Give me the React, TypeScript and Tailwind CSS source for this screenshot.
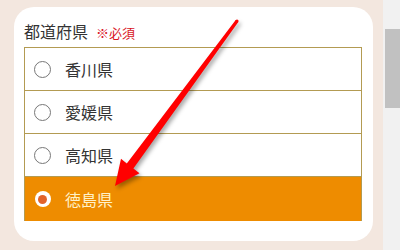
import React from 'react'

const prefs = ['香川県', '愛媛県', '高知県', '徳島県']
const selected = '徳島県'

function Arrow() {
  return (
    <svg
      className="absolute left-0 top-0 pointer-events-none"
      width="400"
      height="250"
      viewBox="0 0 400 250"
      style={{ filter: 'drop-shadow(2px 3px 2px rgba(0,0,0,0.35))' }}
    >
      <circle cx="237" cy="21" r="1.6" fill="#ff0000" />
      <polygon
        points="235.7,20.1 238.3,21.9 133.4,168.4 139.5,173.2 115,186 121,158.8 126.8,163.6"
        fill="#ff0000"
      />
    </svg>
  )
}

export default function App() {
  return (
    <div
      className="relative flex w-[400px] h-[250px] overflow-hidden bg-[#f3e7df]"
      style={{ fontFamily: '"Noto Sans CJK JP", "Noto Sans", sans-serif' }}
    >
      <div className="w-[383px] pl-[14px] pt-[7px]">
        {/* Card */}
        <div className="w-[359px] h-[234px] rounded-[20px] bg-white pl-[10px] pt-[12px]">
          <div className="flex items-baseline h-[24px] leading-[24px]">
            <span className="text-[16px] text-[#333]">都道府県</span>
            <span className="ml-[8px] text-[13px] text-[#d9141e]">※必須</span>
          </div>
          <div className="mt-[4px] w-[338px] border border-[#b39b52]">
            {prefs.map((p) => {
              const on = p === selected
              return (
                <div
                  key={p}
                  className={
                    on
                      ? 'flex items-center h-[44px] bg-[#ee8c00] -mb-px'
                      : 'flex items-center h-[43px] border-b border-[#b39b52]'
                  }
                >
                  <div className="w-[17px] ml-[9px] flex items-center justify-center">
                    {on ? (
                      <div className="w-[16px] h-[16px] rounded-full bg-white flex items-center justify-center">
                        <div className="w-[9px] h-[9px] rounded-full bg-[#e2632a]" />
                      </div>
                    ) : (
                      <div className="w-[17px] h-[17px] rounded-full border border-[#777] bg-white" />
                    )}
                  </div>
                  <span
                    className={
                      on
                        ? 'ml-[14px] text-[16px] text-[#fff1c8]'
                        : 'ml-[14px] text-[16px] text-[#333]'
                    }
                  >
                    {p}
                  </span>
                </div>
              )
            })}
          </div>
        </div>
      </div>
      {/* Scrollbar */}
      <div className="flex-1 bg-[#f1f1f1] pl-[2px]">
        <div className="mt-[29px] h-[79px] bg-[#c1c1c1]" />
      </div>
      <Arrow />
    </div>
  )
}
